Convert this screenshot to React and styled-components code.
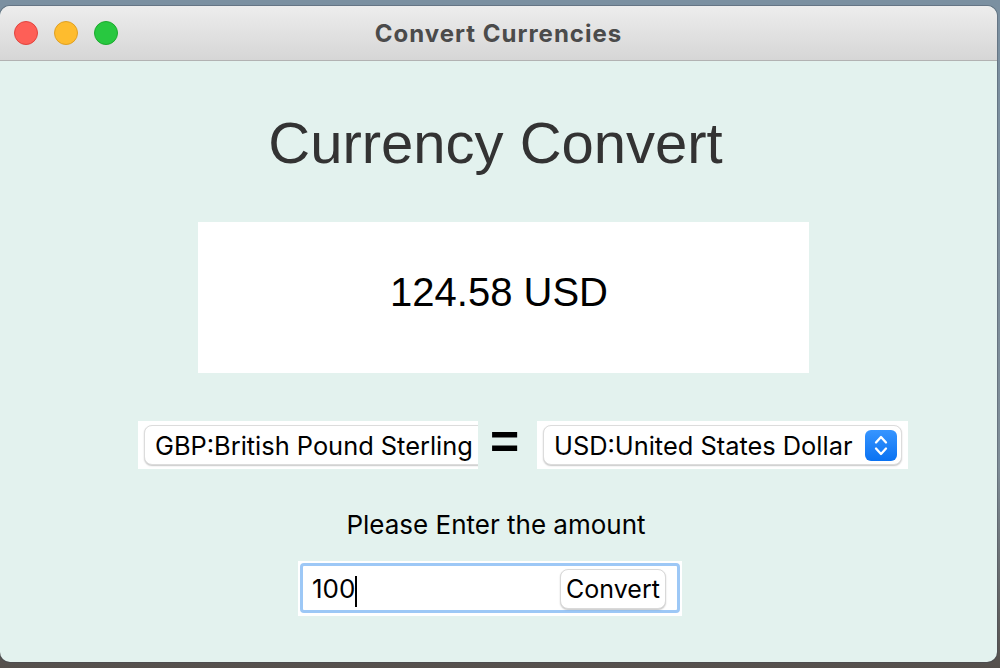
import React from 'react';
import styled, { createGlobalStyle } from 'styled-components';

const GlobalStyle = createGlobalStyle`
  body {
    margin: 0;
    font-family: "Liberation Sans", Arial, sans-serif;
  }
`;

const Desktop = styled.div`
  width: 1000px;
  height: 668px;
  box-sizing: border-box;
  padding-top: 6px;
  overflow: hidden;
  background: linear-gradient(to bottom, #7b90a1 0%, #7f8d97 70%, #55504c 100%);
`;

const Window = styled.div`
  width: 997px;
  height: 656px;
  border-radius: 10px;
  overflow: hidden;
  background: #e3f2ee;
  display: flex;
  flex-direction: column;
  box-shadow: 0 0 0 1px rgba(60, 70, 80, 0.35);
`;

const TitleBar = styled.div`
  flex: none;
  height: 54px;
  display: grid;
  grid-template-columns: 1fr auto 1fr;
  align-items: center;
  background: linear-gradient(to bottom, #ededed, #d6d6d6);
  border-bottom: 1px solid #b2b2b2;
`;

const Lights = styled.div`
  display: flex;
  gap: 16px;
  padding-left: 14px;
`;

const Light = styled.span`
  width: 24px;
  height: 24px;
  border-radius: 50%;
  box-sizing: border-box;
  background: ${p => p.$color};
  border: 1px solid ${p => p.$edge};
`;

const Title = styled.div`
  font-family: Inter, "Liberation Sans", sans-serif;
  font-weight: 700;
  font-size: 24px;
  color: #4b4b4b;
  letter-spacing: 1px;
`;

const Content = styled.main`
  flex: 1;
  display: flex;
  flex-direction: column;
  padding-top: 53px;
`;

const Heading = styled.h1`
  margin: 0;
  padding-right: 6px;
  text-align: center;
  font-weight: 400;
  font-size: 58px;
  line-height: 58px;
  color: #333;
`;

const Row = styled.div`
  display: flex;
  justify-content: center;
  align-items: center;
  margin-top: ${p => p.$top}px;
  padding-left: ${p => (p.$shift > 0 ? p.$shift * 2 : 0)}px;
  padding-right: ${p => (p.$shift < 0 ? -p.$shift * 2 : 0)}px;
`;

const ResultBox = styled.div`
  width: 611px;
  height: 151px;
  box-sizing: border-box;
  padding: 50px 9px 0 0;
  background: #fff;
  text-align: center;
  font-size: 40px;
  line-height: 40px;
  color: #000;
`;

const SelectFrame = styled.div`
  width: ${p => p.$width}px;
  height: 48px;
  box-sizing: border-box;
  padding: 4px ${p => (p.$clipped ? 0 : 6)}px 4px 6px;
  background: #fff;
  overflow: hidden;
  display: flex;
`;

const Pill = styled.div`
  flex: none;
  width: ${p => p.$width}px;
  height: 40px;
  box-sizing: border-box;
  display: flex;
  align-items: center;
  padding: 0 4px 0 10px;
  border: 1px solid #dcdcdc;
  border-radius: 8px;
  box-shadow: 0 1px 1.5px rgba(0, 0, 0, 0.22);
  background: #fff;
  font-family: Inter, "Liberation Sans", sans-serif;
  font-size: 25.4px;
  color: #000;
  white-space: nowrap;
`;

const Stepper = styled.span`
  margin-left: auto;
  width: 32px;
  height: 31px;
  border-radius: 6px;
  background: linear-gradient(to bottom, #3795ff, #0a72f2);
  display: flex;
`;

const Equals = styled.span`
  width: 29px;
  margin: 0 18px 6px 12px;
  font-weight: 700;
  font-size: 50px;
  line-height: 42px;
  text-align: center;
  color: #000;
`;

const Label = styled.div`
  font-family: Inter, "Liberation Sans", sans-serif;
  font-size: 26px;
  line-height: 30px;
  color: #000;
`;

const EntryFrame = styled.div`
  width: 384px;
  height: 55px;
  box-sizing: border-box;
  padding: 2px 2px 3px;
  background: #fff;
`;

const Entry = styled.div`
  height: 100%;
  box-sizing: border-box;
  border: 3px solid #9dc8f6;
  border-radius: 4px;
  background: #fff;
  display: flex;
  align-items: center;
  padding-left: 9px;
  font-family: Inter, "Liberation Sans", sans-serif;
  font-size: 26px;
  color: #000;
`;

const Caret = styled.span`
  width: 2px;
  height: 31px;
  margin-top: 6px;
  background: #000;
`;

const Button = styled.button`
  margin-left: auto;
  margin-right: 11px;
  margin-top: 2px;
  width: 106px;
  height: 40px;
  padding: 0;
  border: 1px solid #d9d9d9;
  border-radius: 8px;
  background: #fff;
  box-shadow: 0 1px 1.5px rgba(0, 0, 0, 0.22);
  font-family: Inter, "Liberation Sans", sans-serif;
  font-size: 25px;
  color: #000;
`;

const Chevrons = () => (
  <svg width="32" height="31" viewBox="0 0 32 31" fill="none">
    <path d="M11 12.5 L16 7 L21 12.5" stroke="#fff" strokeWidth="2.3" strokeLinecap="round" strokeLinejoin="round" />
    <path d="M11 18.5 L16 24 L21 18.5" stroke="#fff" strokeWidth="2.3" strokeLinecap="round" strokeLinejoin="round" />
  </svg>
);

export default function App() {
  return (
    <Desktop>
      <GlobalStyle />
      <Window>
        <TitleBar>
          <Lights>
            <Light $color="#fe5f57" $edge="#e1443e" />
            <Light $color="#febc2e" $edge="#dfa023" />
            <Light $color="#28c840" $edge="#1caa2e" />
          </Lights>
          <Title>Convert Currencies</Title>
          <div />
        </TitleBar>
        <Content>
          <Heading>Currency Convert</Heading>
          <Row $top={50} $shift={5}>
            <ResultBox>124.58 USD</ResultBox>
          </Row>
          <Row $top={48} $shift={24.5}>
            <SelectFrame $width={340} $clipped>
              <Pill $width={380}>GBP:British Pound Sterling</Pill>
            </SelectFrame>
            <Equals>=</Equals>
            <SelectFrame $width={371}>
              <Pill $width={359}>
                USD:United States Dollar
                <Stepper><Chevrons /></Stepper>
              </Pill>
            </SelectFrame>
          </Row>
          <Row $top={41} $shift={-2.5}>
            <Label>Please Enter the amount</Label>
          </Row>
          <Row $top={21} $shift={-8.5}>
            <EntryFrame>
              <Entry>
                100<Caret />
                <Button>Convert</Button>
              </Entry>
            </EntryFrame>
          </Row>
        </Content>
      </Window>
    </Desktop>
  );
}
